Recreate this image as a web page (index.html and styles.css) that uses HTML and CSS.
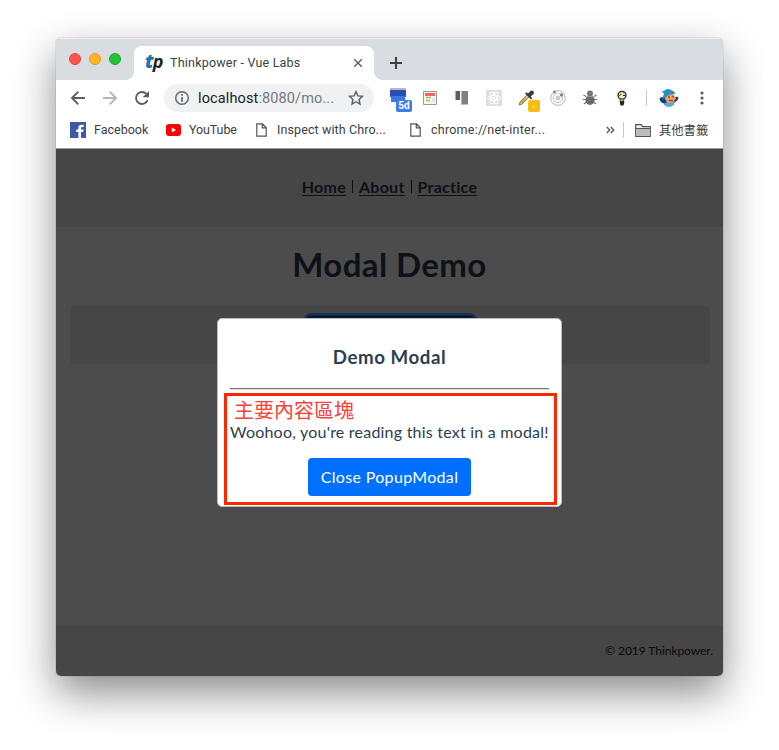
FILE: index.html
```html
<!DOCTYPE html>
<html lang="zh-Hant">
<head>
<meta charset="utf-8">
<title>Thinkpower - Vue Labs</title>
<link rel="stylesheet" href="styles.css">
</head>
<body>
<div class="window">
  <div class="tabstrip">
    <div class="lights"><i class="red"></i><i class="amber"></i><i class="green"></i></div>
    <div class="tab">
      <span class="logo"><b>t</b>p</span>
      <span class="tab-title">Thinkpower - Vue Labs</span>
      <svg class="tab-close" width="10" height="10" viewBox="0 0 10 10"><path d="M1.2 1.2l7.6 7.6M8.8 1.2L1.2 8.8" stroke="#5f6368" stroke-width="1.5"/></svg>
    </div>
    <svg class="newtab" width="12" height="12" viewBox="0 0 12 12"><path d="M6 0v12M0 6h12" stroke="#3c4043" stroke-width="2"/></svg>
  </div>

  <div class="toolbar">
    <div class="slot"><svg width="16" height="16" viewBox="0 0 16 16" fill="none" stroke="#5a5e63" stroke-width="1.9"><path d="M15 8H2.5M8.3 1.7L2 8l6.3 6.3"/></svg></div>
    <div class="slot"><svg width="16" height="16" viewBox="0 0 16 16" fill="none" stroke="#b2b4b7" stroke-width="1.9"><path d="M1 8h12.5M7.7 1.7L14 8l-6.3 6.3"/></svg></div>
    <div class="slot"><svg width="16" height="16" viewBox="0 0 16 16"><path d="M13.6 10.2A6 6 0 1 1 12.4 3.9" fill="none" stroke="#5a5e63" stroke-width="1.9"/><path d="M15 1v6.3H8.7z" fill="#5a5e63"/></svg></div>
    <div class="omnibox">
      <svg width="16" height="16" viewBox="0 0 16 16"><circle cx="8" cy="8" r="6.3" fill="none" stroke="#5f6368" stroke-width="1.4"/><path d="M8 7v4.7M8 4.1v1.7" stroke="#5f6368" stroke-width="1.7"/></svg>
      <span class="url">localhost<em>:8080/mo...</em></span>
      <svg class="star" width="16" height="16" viewBox="0 0 16 16"><path d="M8 1.7l1.9 4.2 4.5.5-3.3 3.1.9 4.5-4-2.3L4 14l.9-4.5L1.600 6.400l4.500-.5z" fill="none" stroke="#5a5e63" stroke-width="1.4"/></svg>
    </div>
    <div class="extensions">
      <div class="slot"><svg width="24" height="24" viewBox="0 0 24 24"><path d="M4 2h16v5H4z" fill="#b8b8b8"/><path d="M4 4h16v7H4z" fill="#2450b8"/><path d="M5 10h14v6H5z" fill="#3f78e0"/></svg><span class="badge days">5d</span></div>
      <div class="slot"><svg width="16" height="16" viewBox="0 0 16 16"><path d="M1.500 1.500h13v13h-13z" fill="#f4f4f4" stroke="#999"/><path d="M3 3h10v3H3z" fill="#f4645f"/><path d="M4 7.500h5M4 10.500h4" stroke="#9ccc56" stroke-width="1.300"/><path d="M10 8h3v4h-3z" fill="#e4e4e4"/></svg></div>
      <div class="slot"><svg width="16" height="16" viewBox="0 0 16 16"><path d="M1 1h5v9H1z" fill="#5c5c5c"/><path d="M7 1h7v13.500H7z" fill="#808080"/><path d="M1.500 1v9M7.500 1v13.500" stroke="#b0b0b0" fill="none"/></svg></div>
      <div class="slot"><svg width="16" height="16" viewBox="0 0 16 16"><path d="M0 0h16v16H0z" fill="#dedede"/><g fill="none" stroke="#fff"><ellipse cx="8" cy="8" rx="6.500" ry="2.600"/><ellipse cx="8" cy="8" rx="6.500" ry="2.600" transform="rotate(60 8 8)"/><ellipse cx="8" cy="8" rx="6.500" ry="2.600" transform="rotate(120 8 8)"/></g><circle cx="8" cy="8" r="1.500" fill="#fff"/></svg></div>
      <div class="slot"><svg width="18" height="18" viewBox="0 0 18 18"><path d="M10 6L3 13l-1 3 3-1 7-7" fill="#e5c98b" stroke="#777"/><path d="M3.500 14.500l5-5" stroke="#e7a323" stroke-width="1.800"/><path d="M8 4.500l6 6 1.200-1.200-1.500-1.800L17 4.500 16.500 2 14 1.500 11 4.500 9.300 3.300z" fill="#3b3b3b"/></svg><span class="badge dot">.</span></div>
      <div class="slot"><svg width="16" height="16" viewBox="0 0 16 16" fill="none" stroke="#c3c3c3"><circle cx="8" cy="8" r="7.300" stroke-width="1.200"/><circle cx="8" cy="8" r="4.600"/><circle cx="8" cy="8" r="2" fill="#ccc"/><g fill="#858585" stroke="none"><circle cx="4.500" cy="1.900" r="1.500"/><circle cx="11.500" cy="5" r="1.700"/></g></svg></div>
      <div class="slot"><svg width="16" height="16" viewBox="0 0 16 16"><path d="M4 6.500L1.500 5M12 6.500L14.500 5M4 9.500H.8M12 9.500h3.200M4.500 12L2 14M11.500 12l2.500 2" stroke="#777" stroke-width="1.200"/><ellipse cx="8" cy="10" rx="4.600" ry="5" fill="#6b6b6b"/><circle cx="8" cy="3.500" r="3" fill="#777"/><path d="M4.600 6.500h6.800" stroke="#aaa" stroke-width=".7"/></svg></div>
      <div class="slot"><svg width="16" height="16" viewBox="0 0 16 16"><circle cx="8" cy="5.300" r="4" fill="#f7edb3" stroke="#222" stroke-width="1.300"/><path d="M5.500 5.500l2-1.500M9 5.500h2" stroke="#111" fill="none"/><path d="M9 3h2" stroke="#e33"/><path d="M6 9h4l-.5 2.500h-3z" fill="#e0c34c" stroke="#222" stroke-width=".7"/><path d="M5.800 11h4.400v2L9.500 15.500h-3L5.800 13z" fill="#292929"/></svg></div>
    </div>
    <i class="rule"></i>
    <svg class="avatar" width="20" height="20" viewBox="0 0 20 20"><path d="M4 13q6-4 12 0l-1 4q-5 4-10 0z" fill="#55aada"/><path d="M.6 10q3-2 6 0l1 4-2 1.500Q.5 15 .6 10zM19.400 9q-3-1-5.500 2l1 3.500Q19.500 13 19.400 9z" fill="#173f7d"/><path d="M6 7l8-1.500 3 5-3 4-5 .5-3-4z" fill="#e8a35f"/><path d="M2 3q3 1 4-1 3-2 6 0 4 1 4 4-6-.5-10 4l-3 1q1-3 2-5-1-2-3-3z" fill="#298fc5"/><path d="M10 12.500h4M13 8.500h2" stroke="#c7382f" stroke-width="1.500"/><path d="M9 9h2" stroke="#4a2d24"/></svg>
    <svg class="menu" width="4" height="16" viewBox="0 0 4 16" fill="#5a5e63"><circle cx="2" cy="3" r="1.600"/><circle cx="2" cy="8" r="1.600"/><circle cx="2" cy="13" r="1.600"/></svg>
  </div>

  <div class="bookmarks">
    <div class="bm bm-fb"><svg width="16" height="16" viewBox="0 0 16 16"><path d="M0 0h16v16H0z" fill="#4059a6"/><path d="M11 16v-6h2.200l.4-2.400H11V6.200q0-1.200 1.300-1.200h1.400V2.800Q8.400 1.900 8.400 5.800v1.800H6.200V10h2.200v6z" fill="#fff"/></svg><span>Facebook</span></div>
    <div class="bm bm-yt"><svg width="15" height="12" viewBox="0 0 15 12"><rect width="15" height="12" rx="3" fill="#f00"/><path d="M5.800 3.500v5L10 6z" fill="#fff"/></svg><span>YouTube</span></div>
    <div class="bm bm-in"><svg width="11" height="14" viewBox="0 0 11 14"><path d="M.8.8h5.700l3.700 3.700v8.700H.8zM6.300.8v4h4" fill="none" stroke="#505357" stroke-width="1.200"/></svg><span>Inspect with Chro...</span></div>
    <div class="bm bm-net"><svg width="11" height="14" viewBox="0 0 11 14"><path d="M.8.8h5.700l3.700 3.700v8.700H.8zM6.300.8v4h4" fill="none" stroke="#505357" stroke-width="1.200"/></svg><span>chrome://net-inter...</span></div>
    <svg class="more" width="9" height="8" viewBox="0 0 9 8"><path d="M.8 1L3.700 4 .8 7M4.800 1l2.900 3-2.900 3" fill="none" stroke="#5a5e63" stroke-width="1.400"/></svg>
    <i class="rule"></i>
    <div class="bm bm-other"><svg width="16" height="13" viewBox="0 0 16 13"><path d="M.7 12.300V.7h5.600l1.300 1.900h7.700v9.700z" fill="#f1f1f1" stroke="#505357" stroke-width="1.200"/><path d="M1.300 4.500h13.400v7.200H1.300z" fill="#bbb"/><path d="M1 4.500h14" stroke="#505357"/></svg><span>其他書籤</span></div>
  </div>

  <div class="page">
    <nav><a>Home</a><i></i><a>About</a><i></i><a>Practice</a></nav>
    <h1><span>Modal Demo</span></h1>
    <div class="demo-card"><div class="open-button"></div></div>
    <footer><span>© 2019 Thinkpower.</span></footer>
    <div class="overlay">
      <div class="modal">
        <h3><span>Demo Modal</span></h3>
        <hr>
        <div class="content">
          <div class="note">主要內容區塊</div>
          <p><span>Woohoo, you're reading this text in a modal!</span></p>
          <button><span>Close PopupModal</span></button>
        </div>
      </div>
    </div>
  </div>
</div>
</body>
</html>
```
FILE: styles.css
```css
* { box-sizing: border-box; }
body { margin: 0; background: #fff; height: 750px; overflow: hidden; padding: 38px 0 0 56px; font-family: Roboto, "Noto Sans CJK TC", sans-serif; }
svg { display: block; flex: none; }
.window { width: 667px; height: 638px; border-radius: 5px; overflow: hidden; background: #fff; display: flex; flex-direction: column; box-shadow: 0 0 1px rgba(0,0,0,.65), 0 17px 42px rgba(0,0,0,.46); }
.tabstrip { height: 42px; flex: none; background: #d9dce1; display: flex; align-items: center; border-top: 1px solid #eceef0; }
.lights { display: flex; gap: 8px; width: 78px; padding-left: 13px; margin-top: -1px; }
.lights i { width: 12px; height: 12px; border-radius: 50%; border: 1px solid #e0443e; background: #ff534d; }
.lights .amber { background: #ffb429; border-color: #e19c20; }
.lights .green { background: #27c138; border-color: #1ba42b; }
.tab { align-self: flex-end; position: relative; width: 240px; height: 34px; background: #fff; border-radius: 8px 8px 0 0; display: flex; align-items: center; padding-left: 11px; }
.tab::before, .tab::after { content: ""; position: absolute; bottom: 0; width: 8px; height: 8px; }
.tab::before { left: -8px; background: radial-gradient(circle at 0 0, transparent 7.5px, #fff 8px); }
.tab::after { right: -8px; background: radial-gradient(circle at 100% 0, transparent 7.5px, #fff 8px); }
.logo { width: 25px; font: italic bold 18px/20px "Open Sans", sans-serif; color: #251f1e; letter-spacing: -.9px; margin-top: -4px; }
.logo b { color: #1976b9; font-size: 19px; }
.tab-title { font-size: 12.500px; color: #3b3e42; white-space: nowrap; letter-spacing: .21px; width: 183px; margin-top: -1px; }
.newtab { margin-left: 16px; margin-top: 7px; }
.toolbar { height: 36px; flex: none; display: flex; align-items: center; padding-left: 6px; }
.slot { position: relative; width: 32px; height: 32px; display: flex; align-items: center; justify-content: center; flex: none; }
.omnibox { width: 210px; height: 28px; border-radius: 14px; background: #eff1f3; margin-left: 6px; padding: 0 10px; display: flex; align-items: center; flex: none; }
.url { margin-left: 8px; width: 140px; white-space: nowrap; font-size: 14.500px; letter-spacing: .12px; color: #202124; }
.url em { font-style: normal; color: #74787d; }
.star { margin-left: 10px; }
.extensions { display: flex; margin-left: 8px; }
.badge { position: absolute; color: #fff; text-align: center; font: bold 10px/12px Roboto, sans-serif; border-radius: 2px; }
.days { left: 14px; top: 18px; width: 16px; height: 12px; background: #3e7de7; }
.dot { left: 18px; top: 18px; width: 12px; height: 12px; background: #fbbc14; line-height: 9px; }
.rule { width: 1px; height: 16px; background: #c4c6c9; flex: none; }
.toolbar .rule { margin-left: 8px; }
.avatar { margin-left: 12px; }
.menu { margin-left: 21px; }
.bookmarks { height: 33px; flex: none; display: flex; align-items: center; padding: 0 0 4px 14px; border-bottom: 1px solid #9b9b9b; }
.bm { display: flex; align-items: center; font-size: 12.500px; color: #3b3e42; white-space: nowrap; }
.bm span { margin-top: -1px; }
.bm-fb { width: 96px; gap: 8px; }
.bm-yt { width: 90px; gap: 8px; }
.bm-yt span { letter-spacing: -.1px; }
.bm-in { width: 154px; gap: 10px; letter-spacing: .1px; }
.bm-net { width: 196px; gap: 10px; letter-spacing: .23px; }
.more { margin-right: 8px; }
.bm-other { margin-left: 11px; gap: 8px; font-size: 12.300px; }
.page { position: relative; flex: 1; display: flex; flex-direction: column; color: #2c3e50; font-family: Lato, "Noto Sans CJK TC", sans-serif; }
nav { height: 78px; background: #e9ebed; display: flex; justify-content: center; align-items: center; font-size: 16px; font-weight: bold; gap: 6px; letter-spacing: .25px; padding-bottom: 3px; }
nav a { text-decoration: underline; text-underline-offset: 2px; }
nav i { width: 1px; height: 13px; background: #2c3e50; }
h1 { margin: 0; height: 79px; text-align: center; font-size: 33px; font-weight: bold; line-height: 74px; letter-spacing: .4px; }
.demo-card { width: 640px; height: 58px; margin-left: 14px; background: #e9ebed; border-radius: 4px; padding-top: 10px; }
.open-button { width: 167px; height: 38px; margin: 0 auto; background: #007bff; border: 1px solid #001c60; border-radius: 4px; box-shadow: 0 0 0 3px #4f9cff; }
footer { margin-top: auto; height: 50px; background: #e9ebed; text-align: right; padding-right: 10px; font-size: 12px; letter-spacing: -.05px; line-height: 50px; color: #222; }
.overlay { position: absolute; inset: 0; background: rgba(0,0,0,.7); display: flex; justify-content: center; align-items: flex-start; padding-top: 169px; }
.modal { width: 345px; height: 189px; background: #fff; border: 1px solid #bbb; border-radius: 5px; padding: 0 6px; }
.modal h3 { margin: 0; height: 69px; text-align: center; font-size: 18.700px; line-height: 77px; letter-spacing: .55px; }
.modal hr { margin: 0 6px; height: 2px; border: 0; border-top: 1px solid #777; border-bottom: 1px solid #ddd; }
.content { margin-top: 3px; width: 333px; height: 112px; border: 3px solid #ff2600; padding-left: 3px; }
.note { margin: 3px 0 0 4px; font: 20px/22px "Noto Sans CJK TC", sans-serif; color: #ff4035; }
.content p { margin: 0; font-size: 16px; line-height: 22px; white-space: nowrap; letter-spacing: .22px; }
.content button { display: block; margin: 15px 0 0 78px; padding: 0; width: 163px; height: 38px; border: 0; border-radius: 4px; background: #0070ff; color: #fff; font: 16px/36px Lato, sans-serif; letter-spacing: .33px; }
.content button span { display: block; margin-top: -1px; }
```
